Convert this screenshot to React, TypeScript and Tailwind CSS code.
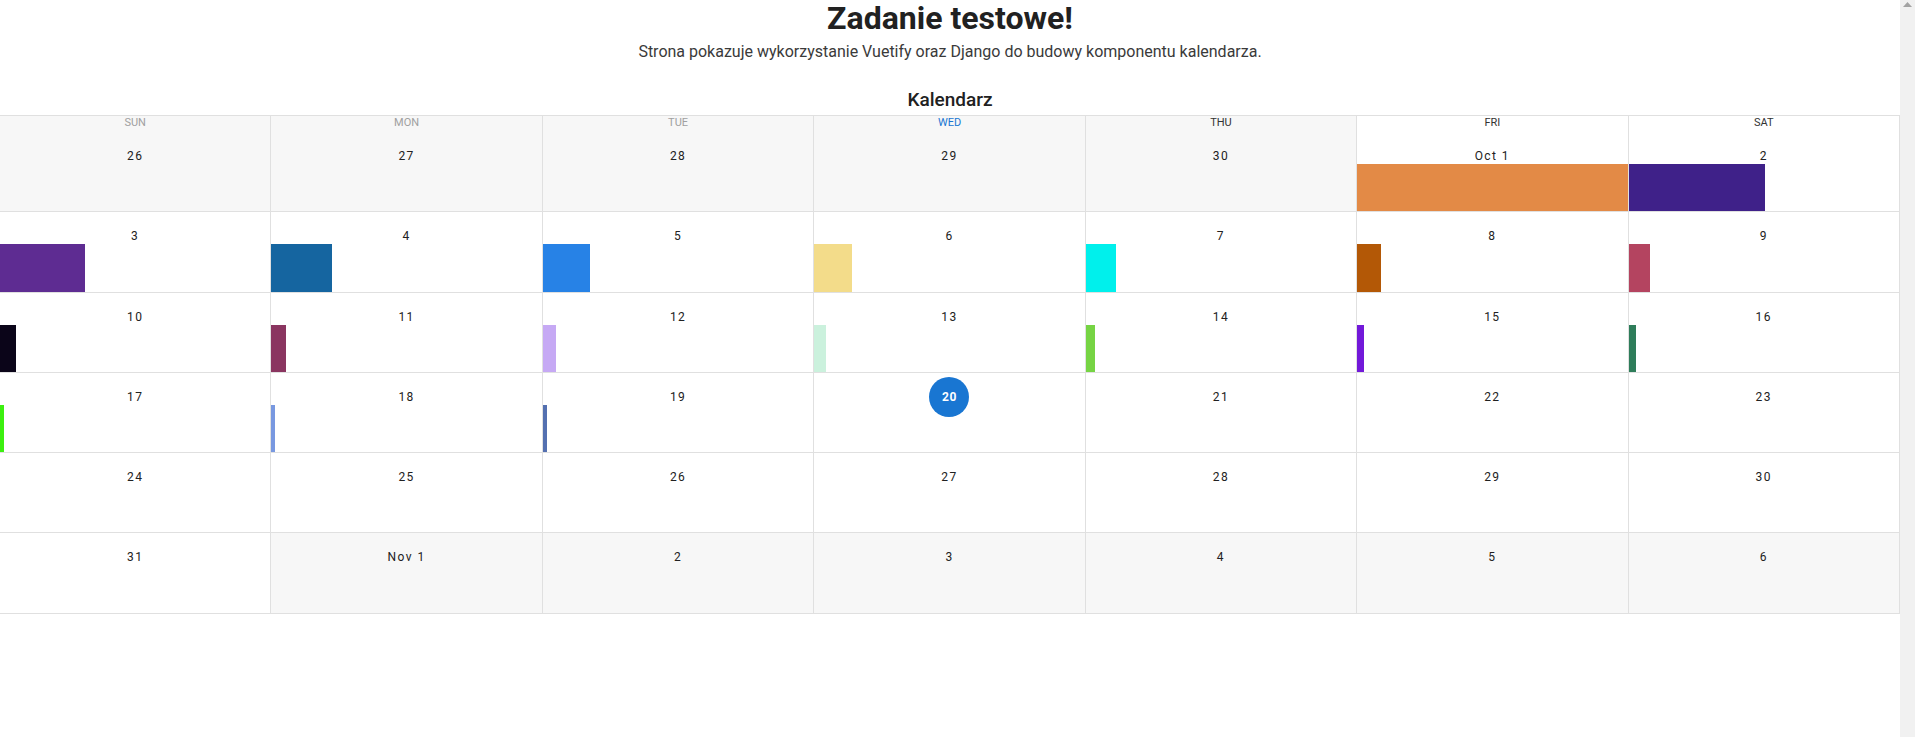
import React from "react";

type Day = { label: string; outside?: boolean; today?: boolean; bar?: [number, string] };

const weekdays = [
  { name: "Sun", tone: "text-[#a0a0a0]", bg: "bg-[#f7f7f7]" },
  { name: "Mon", tone: "text-[#a0a0a0]", bg: "bg-[#f7f7f7]" },
  { name: "Tue", tone: "text-[#a0a0a0]", bg: "bg-[#f7f7f7]" },
  { name: "Wed", tone: "text-[#1976d2]", bg: "bg-[#f7f7f7]" },
  { name: "Thu", tone: "text-[#333333]", bg: "bg-[#f7f7f7]" },
  { name: "Fri", tone: "text-[#333333]", bg: "bg-white" },
  { name: "Sat", tone: "text-[#333333]", bg: "bg-white" },
];

// width in px + colour of the event bar on each day
const bars: Record<string, [number, string]> = {
  "Oct 1": [272, "#e38a46"],
  "2": [136, "#3f2189"],
  "3": [85, "#5e2c92"],
  "4": [61, "#1565a0"],
  "5": [47, "#2782e6"],
  "6": [38, "#f3dc8a"],
  "7": [30, "#00f0ec"],
  "8": [24, "#b35806"],
  "9": [21, "#b44460"],
  "10": [16, "#0b0519"],
  "11": [15, "#8a3560"],
  "12": [13, "#c6a9f4"],
  "13": [12, "#cbf1dd"],
  "14": [9, "#76d444"],
  "15": [7, "#7219d9"],
  "16": [7, "#2e7d5a"],
  "17": [4, "#3cf010"],
  "18": [4, "#7898e0"],
  "19": [4, "#5470b0"],
};

const weeks: Day[][] = [
  [
    { label: "26", outside: true },
    { label: "27", outside: true },
    { label: "28", outside: true },
    { label: "29", outside: true },
    { label: "30", outside: true },
    { label: "Oct 1", bar: bars["Oct 1"] },
    { label: "2", bar: bars["2"] },
  ],
  ["3", "4", "5", "6", "7", "8", "9"].map((d) => ({ label: d, bar: bars[d] })),
  ["10", "11", "12", "13", "14", "15", "16"].map((d) => ({ label: d, bar: bars[d] })),
  ["17", "18", "19", "20", "21", "22", "23"].map((d) => ({ label: d, bar: bars[d], today: d === "20" })),
  ["24", "25", "26", "27", "28", "29", "30"].map((d) => ({ label: d })),
  [
    { label: "31" },
    { label: "Nov 1", outside: true },
    { label: "2", outside: true },
    { label: "3", outside: true },
    { label: "4", outside: true },
    { label: "5", outside: true },
    { label: "6", outside: true },
  ],
];

const DayCell = ({ day }: { day: Day }) => (
  <div className={`flex flex-col min-w-0 border-r border-[#e0e0e0] ${day.outside ? "bg-[#f7f7f7]" : "bg-white"}`}>
    <div className="h-[32px] flex justify-center">
      {day.today ? (
        <span className="mt-[4px] h-[40px] w-[40px] shrink-0 rounded-full bg-[#1976d2] text-white text-[12px] font-bold flex items-center justify-center tracking-[0.05em]">
          {day.label}
        </span>
      ) : (
        <span className="pt-[16px] text-[12px] leading-[16px] font-normal tracking-[0.12em] text-[#212121]">
          {day.label}
        </span>
      )}
    </div>
    <div className="flex-1 flex">
      {day.bar && <div className="h-full" style={{ width: day.bar[0], backgroundColor: day.bar[1] }} />}
    </div>
  </div>
);

export default function App() {
  return (
    <div className="flex w-full h-[737px] bg-white overflow-hidden font-['Roboto',sans-serif]">
      <main className="flex-1 min-w-0 flex flex-col">
        <h1 className="text-center text-[32px] leading-[36px] font-bold text-[#212121]">Zadanie testowe!</h1>
        <p className="mt-[4px] text-center text-[16px] leading-[24px] font-normal text-[#3a3a3a]">
          Strona pokazuje wykorzystanie Vuetify oraz Django do budowy komponentu kalendarza.
        </p>
        <h2 className="mt-[24px] text-center text-[19px] leading-[24px] font-medium text-[#212121]">Kalendarz</h2>

        <section className="mt-[3px] border-t border-[#e0e0e0]">
          <div className="grid grid-cols-7 h-[16px]">
            {weekdays.map((w) => (
              <div
                key={w.name}
                className={`border-r border-[#e0e0e0] text-center uppercase text-[11px] leading-[14px] ${w.tone} ${w.bg}`}
              >
                {w.name}
              </div>
            ))}
          </div>
          {weeks.map((week, i) => (
            <div key={i} className="grid grid-cols-7 h-[80.3px] border-b border-[#e0e0e0]">
              {week.map((d, j) => (
                <DayCell key={j} day={d} />
              ))}
            </div>
          ))}
        </section>
      </main>

      {/* browser scrollbar */}
      <div className="w-[15px] shrink-0 bg-[#f1f1f1] flex flex-col items-center">
        <svg width="9" height="6" viewBox="0 0 9 6" className="mt-[2px]">
          <polygon points="4.5,0 9,5 0,5" fill="#a3a3a3" />
        </svg>
      </div>
    </div>
  );
}
